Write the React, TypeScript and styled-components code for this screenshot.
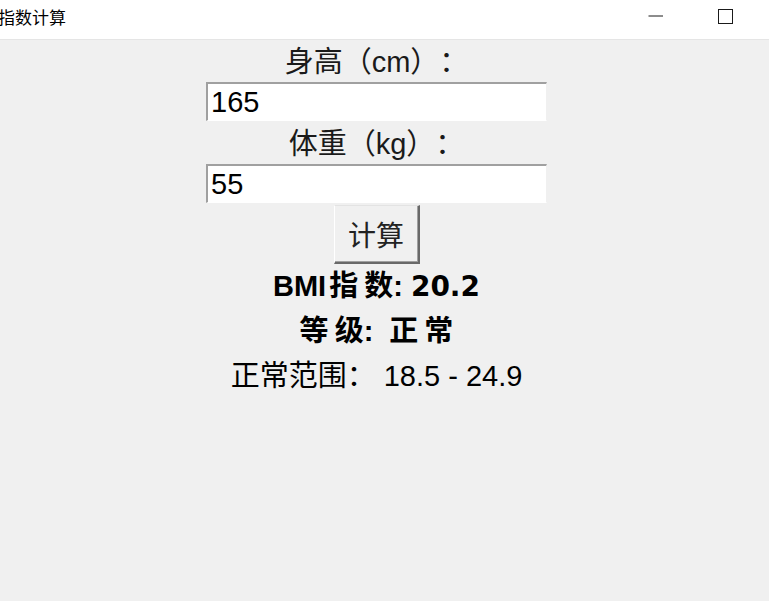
import React from "react";
import styled, { createGlobalStyle } from "styled-components";

const Global = createGlobalStyle`
  html, body {
    margin: 0;
    padding: 0;
    background: #f0f0f0;
  }
  body {
    font-family: "Liberation Sans", "Noto Sans CJK SC", sans-serif;
    color: #000;
    text-spacing-trim: space-all;
  }
`;

const Window = styled.div`
  width: 769px;
  height: 601px;
  display: flex;
  flex-direction: column;
  background: #f0f0f0;
  overflow: hidden;
`;

const TitleBar = styled.div`
  height: 40px;
  flex: none;
  background: #ffffff;
  border-bottom: 1px solid #e5e5e5;
  box-sizing: border-box;
  display: flex;
  align-items: center;
  justify-content: space-between;
`;

const Title = styled.span`
  margin-left: -2px;
  margin-top: -6px;
  font-family: "Noto Sans CJK SC", sans-serif;
  font-size: 17px;
  color: #000;
`;

const Controls = styled.div`
  display: flex;
  align-items: center;
  height: 100%;
  margin-right: 8px;
`;

const CtrlButton = styled.div`
  width: 70px;
  height: 100%;
  display: flex;
  align-items: flex-start;
  justify-content: center;
  padding-top: 9px;
  box-sizing: border-box;
`;

const Body = styled.main`
  flex: 1;
  display: flex;
  flex-direction: column;
  align-items: center;
  padding-right: 16px;
  margin-top: -1px;
`;

const FieldLabel = styled.div`
  height: 43px;
  box-sizing: border-box;
  padding-top: 3px;
  line-height: 40px;
  font-size: 29px;
  color: #1a1a1a;
  white-space: pre;
`;

const Entry = styled.input`
  width: 341px;
  height: 39px;
  box-sizing: border-box;
  margin: 0;
  padding: 0 3px;
  background: #fff;
  border-style: solid;
  border-width: 2px 1px 1px 2px;
  border-color: #a0a0a0 #f0f0f0 #ffffff #a0a0a0;
  font-family: "Liberation Sans", "Noto Sans CJK SC", sans-serif;
  font-size: 29px;
  color: #000;
  outline: none;
`;

const CalcButton = styled.button`
  width: 86px;
  height: 59px;
  margin-top: 2px;
  box-sizing: border-box;
  background: #f0f0f0;
  border-style: solid;
  border-width: 1px 2px 2px 1px;
  border-color: #e3e3e3 #696969 #696969 #ffffff;
  box-shadow: inset -1px -1px 0 #a0a0a0;
  font-family: "Noto Sans CJK SC", sans-serif;
  font-size: 28px;
  color: #222;
  padding: 0;
`;

const ResultLine = styled.div<{ $bold?: boolean }>`
  height: 45px;
  line-height: 45px;
  font-size: 29px;
  font-weight: ${(p) => (p.$bold ? 700 : 400)};
  color: #000;
  white-space: pre;
`;

/* a bold CJK character followed by a small gap before the next one */
const Spaced = styled.span<{ $lead?: number }>`
  margin-right: 6px;
  margin-left: ${(p) => p.$lead ?? 0}px;
`;

/* bold figures are drawn wider than the label text */
const Figure = styled.span`
  font-family: "DejaVu Sans", sans-serif;
  font-size: 28px;
`;

export default function App() {
  return (
    <Window>
      <Global />
      <TitleBar>
        <Title>指数计算</Title>
        <Controls>
          <CtrlButton>
            <svg width="16" height="16" viewBox="0 0 16 16">
              <line x1="0.5" y1="7" x2="15" y2="7" stroke="#1a1a1a" strokeWidth="1" />
            </svg>
          </CtrlButton>
          <CtrlButton>
            <svg width="16" height="16" viewBox="0 0 16 16">
              <rect x="0.5" y="0.5" width="14" height="14" fill="none" stroke="#1a1a1a" strokeWidth="1" />
            </svg>
          </CtrlButton>
        </Controls>
      </TitleBar>
      <Body>
        <FieldLabel>身高（cm）：</FieldLabel>
        <Entry defaultValue="165" />
        <FieldLabel>体重（kg）：</FieldLabel>
        <Entry defaultValue="55" />
        <CalcButton>计算</CalcButton>
        <ResultLine $bold>
          BMI<Spaced $lead={3}>指</Spaced>数: <Figure>20.2</Figure>
        </ResultLine>
        <ResultLine $bold>
          <Spaced>等</Spaced>级: <Spaced $lead={8}>正</Spaced>常
        </ResultLine>
        <ResultLine>正常范围： 18.5 - 24.9</ResultLine>
      </Body>
    </Window>
  );
}
